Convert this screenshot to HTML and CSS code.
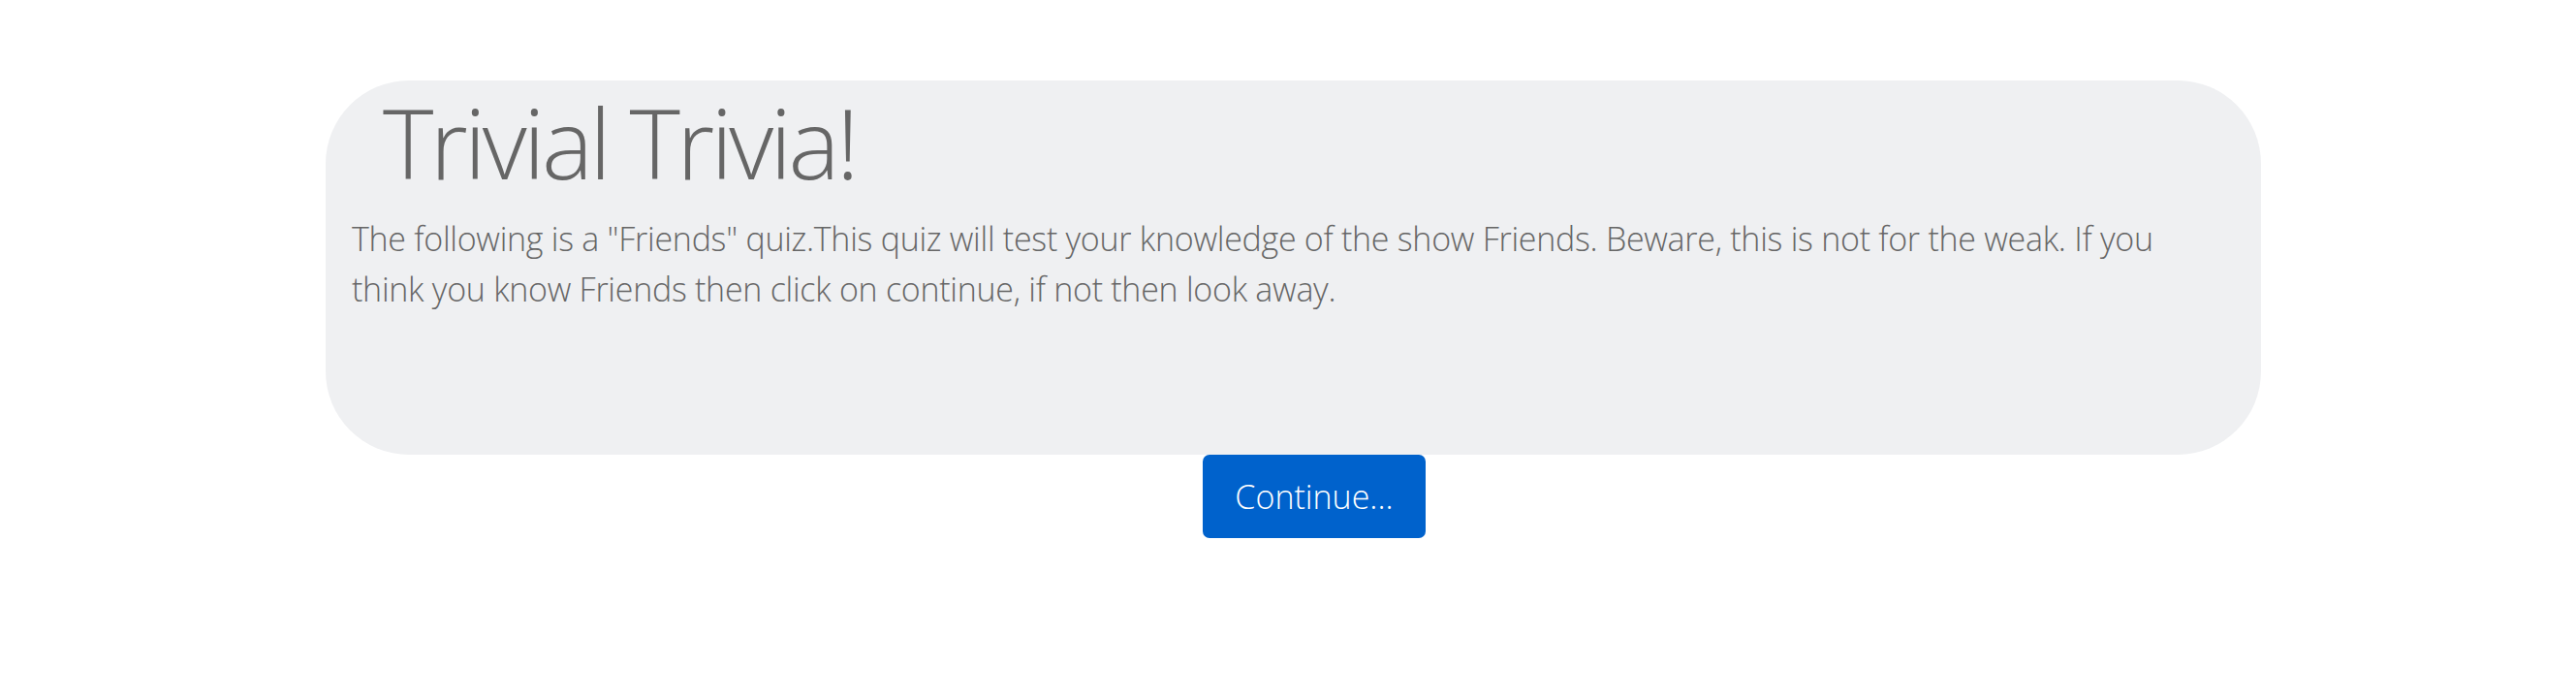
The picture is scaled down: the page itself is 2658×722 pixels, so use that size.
FILE: index.html
```html
<!DOCTYPE html>
<html lang="en">
<head>
<meta charset="utf-8">
<title>Trivial Trivia!</title>
<link rel="stylesheet" href="styles.css">
</head>
<body>
<main class="page">
  <section class="card">
    <h1 class="title">Trivial Trivia!</h1>
    <p class="intro">The following is a "Friends" quiz.This quiz will test your knowledge of the show Friends. Beware, this is not for the weak. If you think you know Friends then click on continue, if not then look away.</p>
  </section>
  <div class="actions">
    <button class="btn" type="button">Continue...</button>
  </div>
</main>
</body>
</html>
```

FILE: styles.css
```css
html, body {
  margin: 0;
  padding: 0;
  background: #ffffff;
}

body {
  font-family: "Open Sans", "Noto Sans", sans-serif;
  font-weight: 300;
  color: #666666;
}

.page {
  padding-top: 83px;
}

.card {
  margin-left: 336px;
  width: 1997px;
  height: 386px;
  box-sizing: border-box;
  padding: 3px 30px 0 27px;
  background: #eff0f2;
  border-radius: 86px;
}

.title {
  margin: 0 0 14px 32px;
  font-size: 100px;
  line-height: 120px;
  font-weight: 300;
  letter-spacing: -3.7px;
  color: #666666;
}

.intro {
  margin: 0;
  font-size: 34px;
  line-height: 52px;
  letter-spacing: -0.28px;
  color: #666666;
}

.actions {
  padding-left: 1241px;
}

.btn {
  display: block;
  width: 230px;
  height: 86px;
  padding: 0;
  border: none;
  border-radius: 7px;
  background: #0062cc;
  color: #ffffff;
  font-family: "Open Sans", "Noto Sans", sans-serif;
  font-weight: 300;
  font-size: 34px;
  cursor: pointer;
}
```
